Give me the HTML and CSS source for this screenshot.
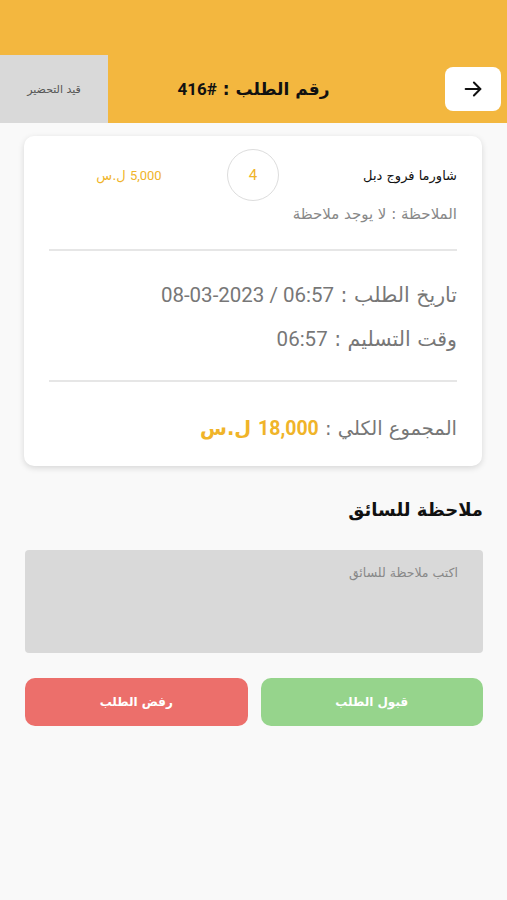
FILE: index.html
```html
<!DOCTYPE html>
<html lang="ar" dir="rtl">
<head>
    <meta charset="utf-8">
    <title>تفاصيل الطلب</title>
    <link rel="stylesheet" href="styles.css">
</head>
<body>
    <div class="header">
        <div class="header-row">
            <div class="back-cell">
                <button class="back-btn">
                    <svg width="22" height="22" viewBox="0 0 24 24" fill="none" stroke="#111" stroke-width="2.2" stroke-linecap="round" stroke-linejoin="round">
                        <path d="M4 12h16"/>
                        <path d="M13 5l7 7-7 7"/>
                    </svg>
                </button>
            </div>
            <div class="title">رقم الطلب : <span class="num">416#</span></div>
            <div class="status-cell">
                <div class="status">قيد التحضير</div>
            </div>
        </div>
    </div>

    <div class="card">
        <div class="item-row">
            <div class="item-name">شاورما فروج دبل</div>
            <div class="qty">4</div>
            <div class="price"><span class="num">5,000</span> ل.س</div>
        </div>
        <div class="item-note">الملاحظة : لا يوجد ملاحظة</div>

        <div class="divider"></div>

        <div class="info">
            <div class="info-line">تاريخ الطلب : <span class="num">08-03-2023 / 06:57</span></div>
            <div class="info-line">وقت التسليم : <span class="num">06:57</span></div>
        </div>

        <div class="divider divider-tight"></div>

        <div class="total">المجموع الكلي : <span class="total-amount"><span class="num">18,000</span> ل.س</span></div>
    </div>

    <div class="driver">
        <div class="driver-title">ملاحظة للسائق</div>
        <textarea class="driver-note" placeholder="اكتب ملاحظة للسائق"></textarea>
        <div class="actions">
            <button class="btn accept">قبول الطلب</button>
            <button class="btn reject">رفض الطلب</button>
        </div>
    </div>
</body>
</html>
```

FILE: styles.css
```css
body {
    margin: 0;
    background-color: #f9f9f9;
    font-family: "DejaVu Sans", sans-serif;
    color: #111;
}

.num {
    font-family: "Roboto", "DejaVu Sans", sans-serif;
    direction: ltr;
    unicode-bidi: isolate;
}

.header {
    background-color: #f3b73f;
    padding-top: 55px;
}

.header-row {
    height: 68px;
    display: grid;
    grid-template-columns: 1fr auto 1fr;
    align-items: center;
}

.back-cell {
    display: flex;
    justify-content: flex-start;
    padding-right: 6px;
}

.back-btn {
    width: 56px;
    height: 44px;
    background-color: #fff;
    border: none;
    border-radius: 8px;
    display: flex;
    align-items: center;
    justify-content: center;
    padding: 0;
}

.title {
    font-size: 17px;
    font-weight: bold;
    color: #111;
    white-space: nowrap;
}

.status-cell {
    display: flex;
    justify-content: flex-end;
    height: 100%;
}

.status {
    width: 108px;
    height: 100%;
    background-color: #d9d9d9;
    color: #555;
    font-size: 11px;
    display: flex;
    align-items: center;
    justify-content: center;
}

.card {
    margin: 13px 25px 0 24px;
    background-color: #fff;
    border-radius: 10px;
    box-shadow: 0 2px 6px rgba(0, 0, 0, 0.14);
    padding: 13px 25px 26px 25px;
}

.item-row {
    display: grid;
    grid-template-columns: 1fr auto 1fr;
    align-items: center;
}

.item-name {
    font-size: 13px;
    color: #111;
}

.qty {
    width: 50px;
    height: 50px;
    border: 1px solid #ddd;
    border-radius: 50%;
    display: flex;
    align-items: center;
    justify-content: center;
    font-family: "Roboto", sans-serif;
    font-size: 15px;
    color: #f0b429;
}

.price {
    font-size: 13px;
    color: #f0b429;
    text-align: center;
    padding-right: 18px;
}

.item-note {
    margin-top: 4px;
    font-size: 15px;
    color: #888;
}

.divider {
    height: 2px;
    background-color: #e6e6e6;
    margin-top: 26px;
}

.divider-tight {
    margin-top: 19px;
}

.info {
    padding-top: 22px;
}

.info-line {
    font-size: 20.5px;
    color: #777;
    line-height: 44px;
}

.total {
    margin-top: 35px;
    font-size: 19.5px;
    color: #777;
}

.total-amount {
    color: #f0b429;
    font-weight: bold;
}

.driver {
    padding: 33px 24px 0 25px;
}

.driver-title {
    font-size: 18px;
    font-weight: bold;
    color: #111;
}

.driver-note {
    display: block;
    box-sizing: border-box;
    width: 100%;
    height: 103px;
    margin-top: 30px;
    background-color: #d9d9d9;
    border: none;
    border-radius: 4px;
    padding: 15px 25px;
    font-family: "DejaVu Sans", sans-serif;
    font-size: 12.5px;
    resize: none;
}

.driver-note::placeholder {
    color: #888;
}

.actions {
    display: flex;
    gap: 13px;
    margin-top: 25px;
}

.btn {
    flex: 1;
    height: 48px;
    border: none;
    border-radius: 10px;
    color: #fff;
    font-family: "DejaVu Sans", sans-serif;
    font-size: 12px;
    font-weight: bold;
}

.accept {
    background-color: #96d48c;
}

.reject {
    background-color: #ec6f6b;
}
```
